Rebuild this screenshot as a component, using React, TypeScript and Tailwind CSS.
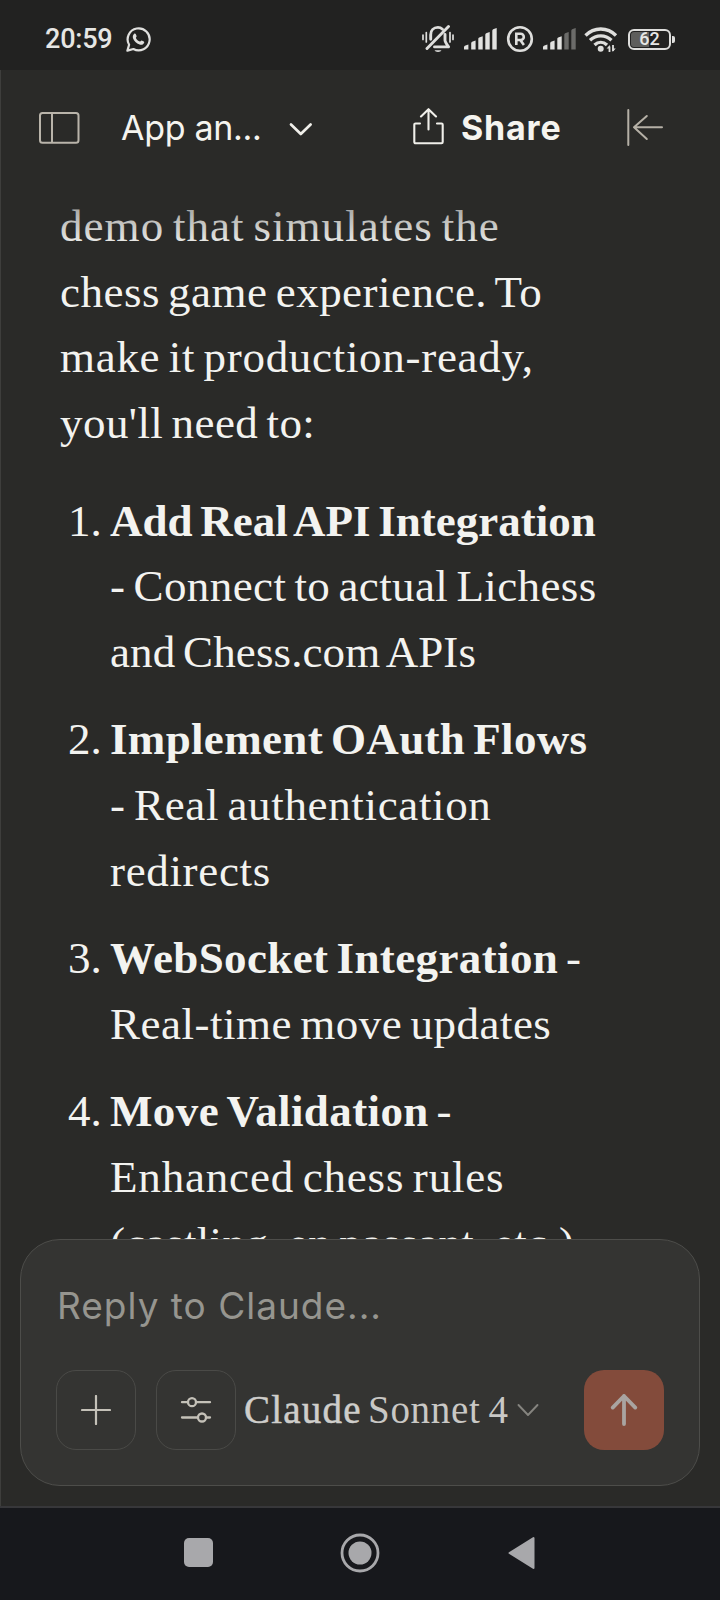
import type { ReactNode } from "react";

function BellOff() {
  return (
    <svg width="32" height="28" viewBox="0 0 32 28" fill="none" stroke="#dededc" strokeWidth="2.900" strokeLinecap="round" strokeLinejoin="round">
      <path d="M20.500 4.200C19.200 3 17.600 2.400 15.900 2.400c-4.300 0-7.200 3.100-7.200 7.300v4.600" />
      <path d="M23 9.500v5.800c0 1.700.9 3 3.600 6.600H12.500" />
      <path d="M26.500 1.600L5 23.500" />
      <path d="M12.500 25.300h7a3.600 2.200 0 0 1-7 0z" fill="#dededc" stroke="none" />
      <path d="M1 10v4.500M4.300 7.500v9.500M28 7.500v9.500M31 10v4.500" strokeWidth="1.700" />
    </svg>
  );
}

const bars = [
  { x: 0, y: 17 },
  { x: 7.2, y: 13 },
  { x: 14.3, y: 8.6 },
  { x: 21.3, y: 4.5 },
  { x: 28.3, y: 0.5 },
];

function Signal({ level }: { level: number }) {
  return (
    <svg width="33" height="22" viewBox="0 0 33 22">
      {bars.map((b, i) => (
        <path
          key={b.x}
          d={`M${b.x} ${b.y + 2}q.3-1 1.500-1.400l2.900-1V21.500H${b.x}z`}
          fill={i < level ? "#e2e2e0" : "#6b6b69"}
        />
      ))}
    </svg>
  );
}

function Wifi() {
  return (
    <svg width="34" height="27" viewBox="0 0 34 27" fill="none" stroke="#dededc" strokeWidth="3.300">
      <path d="M1.500 9.500C10 .8 23.500.8 32 9.500" />
      <path d="M6 14.300c6.200-6 15.300-6 21.500 0" />
      <path d="M10.500 19c3.700-3.600 8.800-3.600 12.500 0" />
      <circle cx="16.700" cy="22.700" r="3" fill="#dededc" stroke="none" />
      <path d="M25.500 26v-5.500M29 19v6" strokeWidth="1.800" />
      <path d="M22.600 22.600l3.300-3.600v3.600zM31.700 22.400l-3.100 3.600v-3.600z" fill="#dededc" stroke="none" />
    </svg>
  );
}

function StatusBar() {
  return (
    <div className="flex h-[70px] shrink-0 items-start justify-between bg-[#222221] pr-[45px] pl-[45px] text-[#e6e6e4]">
      <div className="flex h-[79px] items-center gap-[13px]">
        <span className="font-[Roboto,sans-serif] text-[27px] leading-none font-medium tracking-[-0.2px]">20:59</span>
        <svg width="25" height="25" viewBox="0 0 25 25" fill="none" stroke="#e0e0de">
          <path d="M1.400 23.600l1.700-5.800A11 11 0 1 1 7.400 22z" strokeWidth="2.200" strokeLinejoin="round" />
          <path d="M8.200 6.800c.5-.4 1.300-.3 1.500.3l.9 2c.2.500-.8 1.500-.7 1.900.8 1.700 2.200 2.900 4 3.600.5.100 1.300-1.300 1.800-1.100l2.100 1c.6.300.5.900.2 1.500-.8 1.700-2.700 2.200-4.400 1.600-3.300-1.100-5.600-3.300-6.600-6.300-.5-1.700-.1-3.500 1.200-4.500z" fill="#e0e0de" stroke="none" />
        </svg>
      </div>
      <div className="flex h-[78px] items-center">
        <BellOff />
        <span className="ml-[10px] flex"><Signal level={5} /></span>
        <svg className="ml-[9px]" width="28" height="28" viewBox="0 0 28 28" fill="none" stroke="#dededc" strokeWidth="2.600">
          <circle cx="14" cy="14" r="11.800" />
          <path d="M10.300 20V8.800h4.400a3 3 0 0 1 0 6.200h-4.400M14.300 15l3.600 5" />
        </svg>
        <span className="ml-[9px] flex"><Signal level={3} /></span>
        <span className="ml-[8px] flex"><Wifi /></span>
        <div className="ml-[10px] flex items-center gap-[1px]">
          <div className="relative flex h-[21px] w-[43px] items-center justify-center overflow-hidden rounded-[6px] border-2 border-[#dededc]">
            <div className="absolute inset-y-[1px] left-[1px] w-[18px] rounded-l-[3px] bg-[#5e5e5c]" />
            <span className="relative font-[Roboto,sans-serif] text-[18px] leading-none font-medium">62</span>
          </div>
          <div className="h-[7px] w-[3px] rounded-r-[2px] bg-[#dededc]" />
        </div>
      </div>
    </div>
  );
}

function Header() {
  return (
    <header className="flex h-[120px] shrink-0 items-start pt-[38px] font-[Inter,sans-serif] text-[#f5f4ef]">
      <svg className="ml-[38px]" width="42" height="40" viewBox="0 0 42 40" fill="none" stroke="#b9b4aa" strokeWidth="2">
        <rect x="2" y="5" width="38.500" height="29.800" rx="2.500" />
        <path d="M14 5v30" />
      </svg>
      <span className="ml-[41px] w-[142px] text-[34px] leading-10 tracking-[-0.3px] whitespace-nowrap">App an...</span>
      <svg className="ml-[25px]" width="26" height="40" viewBox="0 0 26 40" fill="none" stroke="#f0efea" strokeWidth="2.700" strokeLinecap="round" strokeLinejoin="round">
        <path d="M3 16.500l9.800 9.500 9.800-9.500" />
      </svg>
      <svg className="ml-[96px]" width="36" height="40" viewBox="0 0 36 40" fill="none" stroke="#f0efea" strokeWidth="2.100" strokeLinecap="round" strokeLinejoin="round">
        <path d="M10 15.500H5.500a1.200 1.200 0 0 0-1.200 1.200v17.400a1.200 1.200 0 0 0 1.200 1.200h26a1.200 1.200 0 0 0 1.200-1.200V16.700a1.200 1.200 0 0 0-1.200-1.200H27M18.500 21.500V1.500M11 8.500l7.500-7.300L26 8.500" />
      </svg>
      <span className="ml-[15px] w-[104px] text-[34px] leading-10 font-bold tracking-[0.8px]">Share</span>
      <svg className="ml-[60px]" width="38" height="40" viewBox="0 0 38 40" fill="none" stroke="#b5b0a6" strokeWidth="2" strokeLinecap="round" strokeLinejoin="round">
        <path d="M3.300 2v35M37 19.300H9M21.800 8L9 19.300l12.800 11.700" />
      </svg>
    </header>
  );
}

function Item({ n, children }: { n: number; children: ReactNode }) {
  return (
    <li className="flex">
      <span className="w-[42px] shrink-0">{n}.</span>
      <div>{children}</div>
    </li>
  );
}

function Message() {
  return (
    <main className="relative h-[1049px] shrink-0 overflow-hidden pt-[4px] pl-[60px] font-['Liberation_Serif',serif] text-[45px] leading-[65.700px] [word-spacing:-3.500px] whitespace-nowrap text-[#f3f3f0]">
      <p>
        <span className="block tracking-[1.05px]">demo that simulates the</span>
        <span className="block tracking-[0.48px]">chess game experience. To</span>
        <span className="block tracking-[0.7px]">make it production-ready,</span>
        <span className="block tracking-[0.45px]">you'll need to:</span>
      </p>
      <ol className="mt-[31.700px] flex flex-col gap-[21.700px] pl-[8px]">
        <Item n={1}>
          <b className="block">Add Real API Integration</b>
          <span className="block tracking-[0.4px]">- Connect to actual Lichess</span>
          <span className="block tracking-[0.1px]">and Chess.com APIs</span>
        </Item>
        <Item n={2}>
          <b className="block tracking-[0.33px]">Implement OAuth Flows</b>
          <span className="block tracking-[0.65px]">- Real authentication</span>
          <span className="block tracking-[0.66px]">redirects</span>
        </Item>
        <Item n={3}>
          <span className="block"><b className="tracking-[0.38px]">WebSocket Integration</b> -</span>
          <span className="block tracking-[0.5px]">Real-time move updates</span>
        </Item>
        <Item n={4}>
          <span className="block"><b className="tracking-[0.4px]">Move Validation</b> -</span>
          <span className="block tracking-[0.83px]">Enhanced chess rules</span>
          <span className="block tracking-[0.36px]">(castling, en passant, etc.)</span>
        </Item>
      </ol>
      <div className="absolute top-0 right-0 left-0.5 h-[58px] bg-linear-to-b from-[#2a2a28]/55 to-[#2a2a28]/0" />
    </main>
  );
}

function Composer() {
  return (
    <section className="mx-5 flex h-[247px] shrink-0 flex-col rounded-[40px] border border-[#4d4d4a] bg-[#343432] px-[35px]">
      <div className="h-[130px] pt-[41px] pl-[1px] font-[Inter,sans-serif] text-[37px] leading-[50px] tracking-[1px] text-[#96958f]">Reply to Claude...</div>
      <div className="flex h-20 items-center">
        <button className="flex size-20 items-center justify-center rounded-[20px] border border-[#4a4a47]">
          <svg width="30" height="30" viewBox="0 0 30 30" stroke="#c4c1b8" strokeWidth="2.200" strokeLinecap="round"><path d="M15 1v28M1 15h28" /></svg>
        </button>
        <button className="ml-5 flex size-20 items-center justify-center rounded-[20px] border border-[#4a4a47]">
          <svg width="32" height="26" viewBox="0 0 32 26" fill="none" stroke="#c4c1b8" strokeWidth="2.300" strokeLinecap="round">
            <path d="M2 5.200h6M16 5.200h14M2 20.500h16M26 20.500h4" />
            <circle cx="12" cy="5.200" r="4" />
            <circle cx="22" cy="20.500" r="4" />
          </svg>
        </button>
        <div className="ml-[8px] flex items-center font-['Liberation_Serif',serif] text-[39px] leading-[60px] whitespace-nowrap">
          <span className="w-[124px] tracking-[1.2px] text-[#cfcecb] [-webkit-text-stroke:0.5px_#cfcecb]">Claude</span>
          <span className="w-[141px] tracking-[0.7px] [word-spacing:-2.500px] text-[#c9c8c5]">Sonnet 4</span>
        </div>
        <svg className="ml-[8px]" width="22" height="14" viewBox="0 0 22 14" fill="none" stroke="#85847f" strokeWidth="1.900" strokeLinecap="round" strokeLinejoin="round"><path d="M1.500 2l9.500 10 9.500-10" /></svg>
        <button className="ml-auto flex size-20 items-center justify-center rounded-[20px] bg-[#834b3b]">
          <svg width="30" height="34" viewBox="0 0 30 34" fill="none" stroke="#a9a4a1" strokeWidth="3.800" strokeLinecap="round" strokeLinejoin="round"><path d="M15 31V3M3.700 14.600L15 3l11.300 11.600" /></svg>
        </button>
      </div>
    </section>
  );
}

function NavBar() {
  return (
    <nav className="flex h-[94px] shrink-0 items-center border-t-2 border-[#37373a] bg-[#17181c] pb-[3px] pl-[184px]">
      <div className="size-[29px] rounded-[5px] bg-[#a8a8ab]" />
      <svg className="ml-[127px]" width="40" height="40" viewBox="0 0 40 40" fill="none">
        <circle cx="20" cy="20" r="18" stroke="#a8a8ab" strokeWidth="2.800" />
        <circle cx="20" cy="20" r="11.500" fill="#a8a8ab" />
      </svg>
      <svg className="ml-[128px]" width="27" height="34" viewBox="0 0 27 34">
        <path d="M1.500 17L25.500 2v30z" fill="#a8a8ab" stroke="#a8a8ab" strokeWidth="2" strokeLinejoin="round" />
      </svg>
    </nav>
  );
}

export default function App() {
  return (
    <div className="flex h-[1600px] w-[720px] flex-col overflow-hidden bg-[#2a2a28]">
      <StatusBar />
      <div className="flex h-[1436px] shrink-0 flex-col shadow-[inset_1px_0_0_#3e3e3c]">
        <Header />
        <Message />
        <Composer />
      </div>
      <NavBar />
    </div>
  );
}
